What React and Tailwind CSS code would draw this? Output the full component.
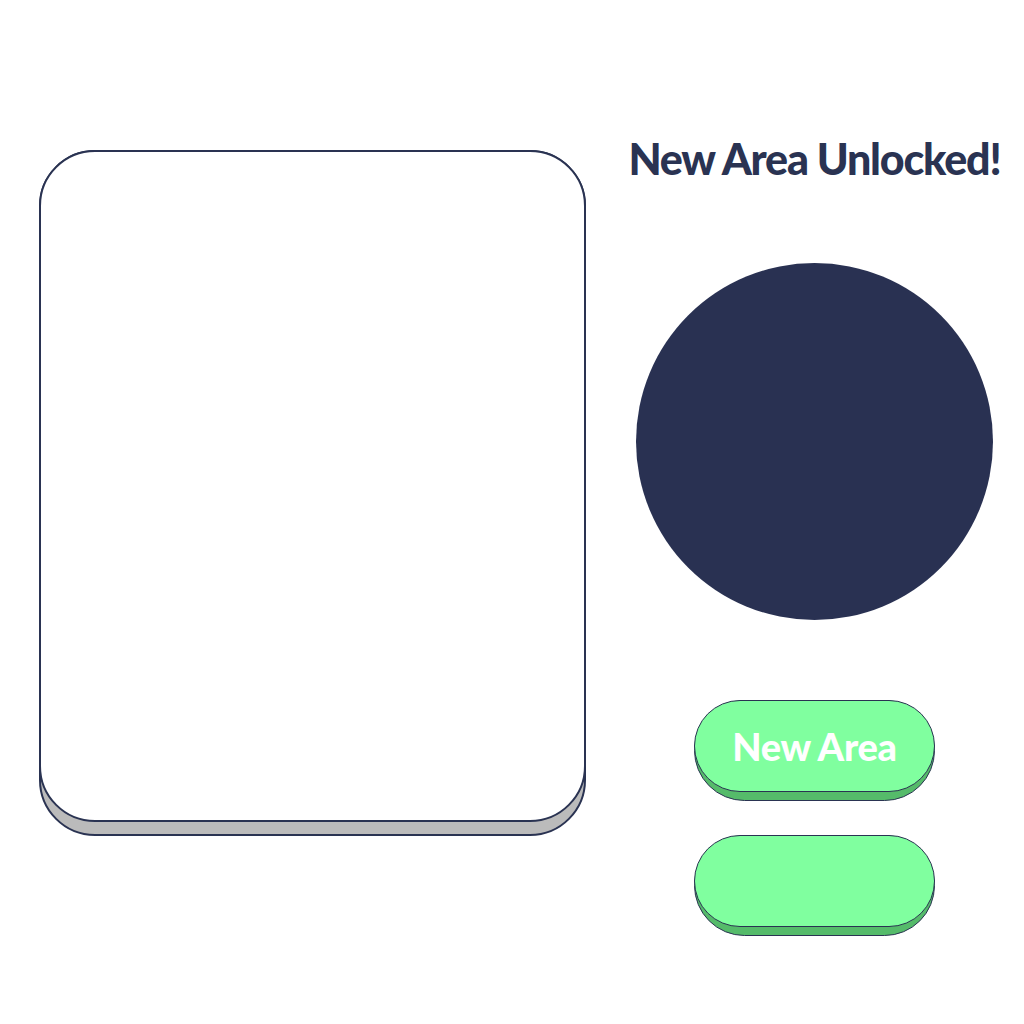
import React from "react";

function ChunkyButton({ label }) {
  return (
    <div className="w-[241px] h-[101px] rounded-full bg-[#55bb6a] border border-[#2a3352]">
      <div className="-mx-px -mt-px h-[92px] rounded-full bg-[#80ff9f] border border-[#2a3352] flex items-center justify-center">
        {label && (
          <span className="text-white font-black text-[38px] leading-none tracking-[-0.3px]">
            {label}
          </span>
        )}
      </div>
    </div>
  );
}

export default function App() {
  return (
    <div
      className="w-full h-[1024px] bg-white flex items-start pl-[39px] pt-[135px]"
      style={{ fontFamily: "Lato, 'Open Sans', sans-serif" }}
    >
      <div className="mt-[15px] w-[547px] h-[686px] rounded-[56px] bg-[#bbbbbb] border-2 border-[#2a3352]">
        <div className="-mx-[2px] -mt-[2px] h-[672px] rounded-[56px] bg-white border-2 border-[#2a3352]"></div>
      </div>

      <div className="ml-[19px] flex-1 flex flex-col items-center">
        <h1 className="text-[#2a3352] font-black text-[43px] leading-[48px] tracking-[-1.2px] whitespace-nowrap">
          New Area Unlocked!
        </h1>
        <div className="mt-[80px] w-[357px] h-[357px] rounded-full bg-[#293152]"></div>
        <div className="mt-[80px]">
          <ChunkyButton label="New Area" />
        </div>
        <div className="mt-[34px]">
          <ChunkyButton />
        </div>
      </div>
    </div>
  );
}
